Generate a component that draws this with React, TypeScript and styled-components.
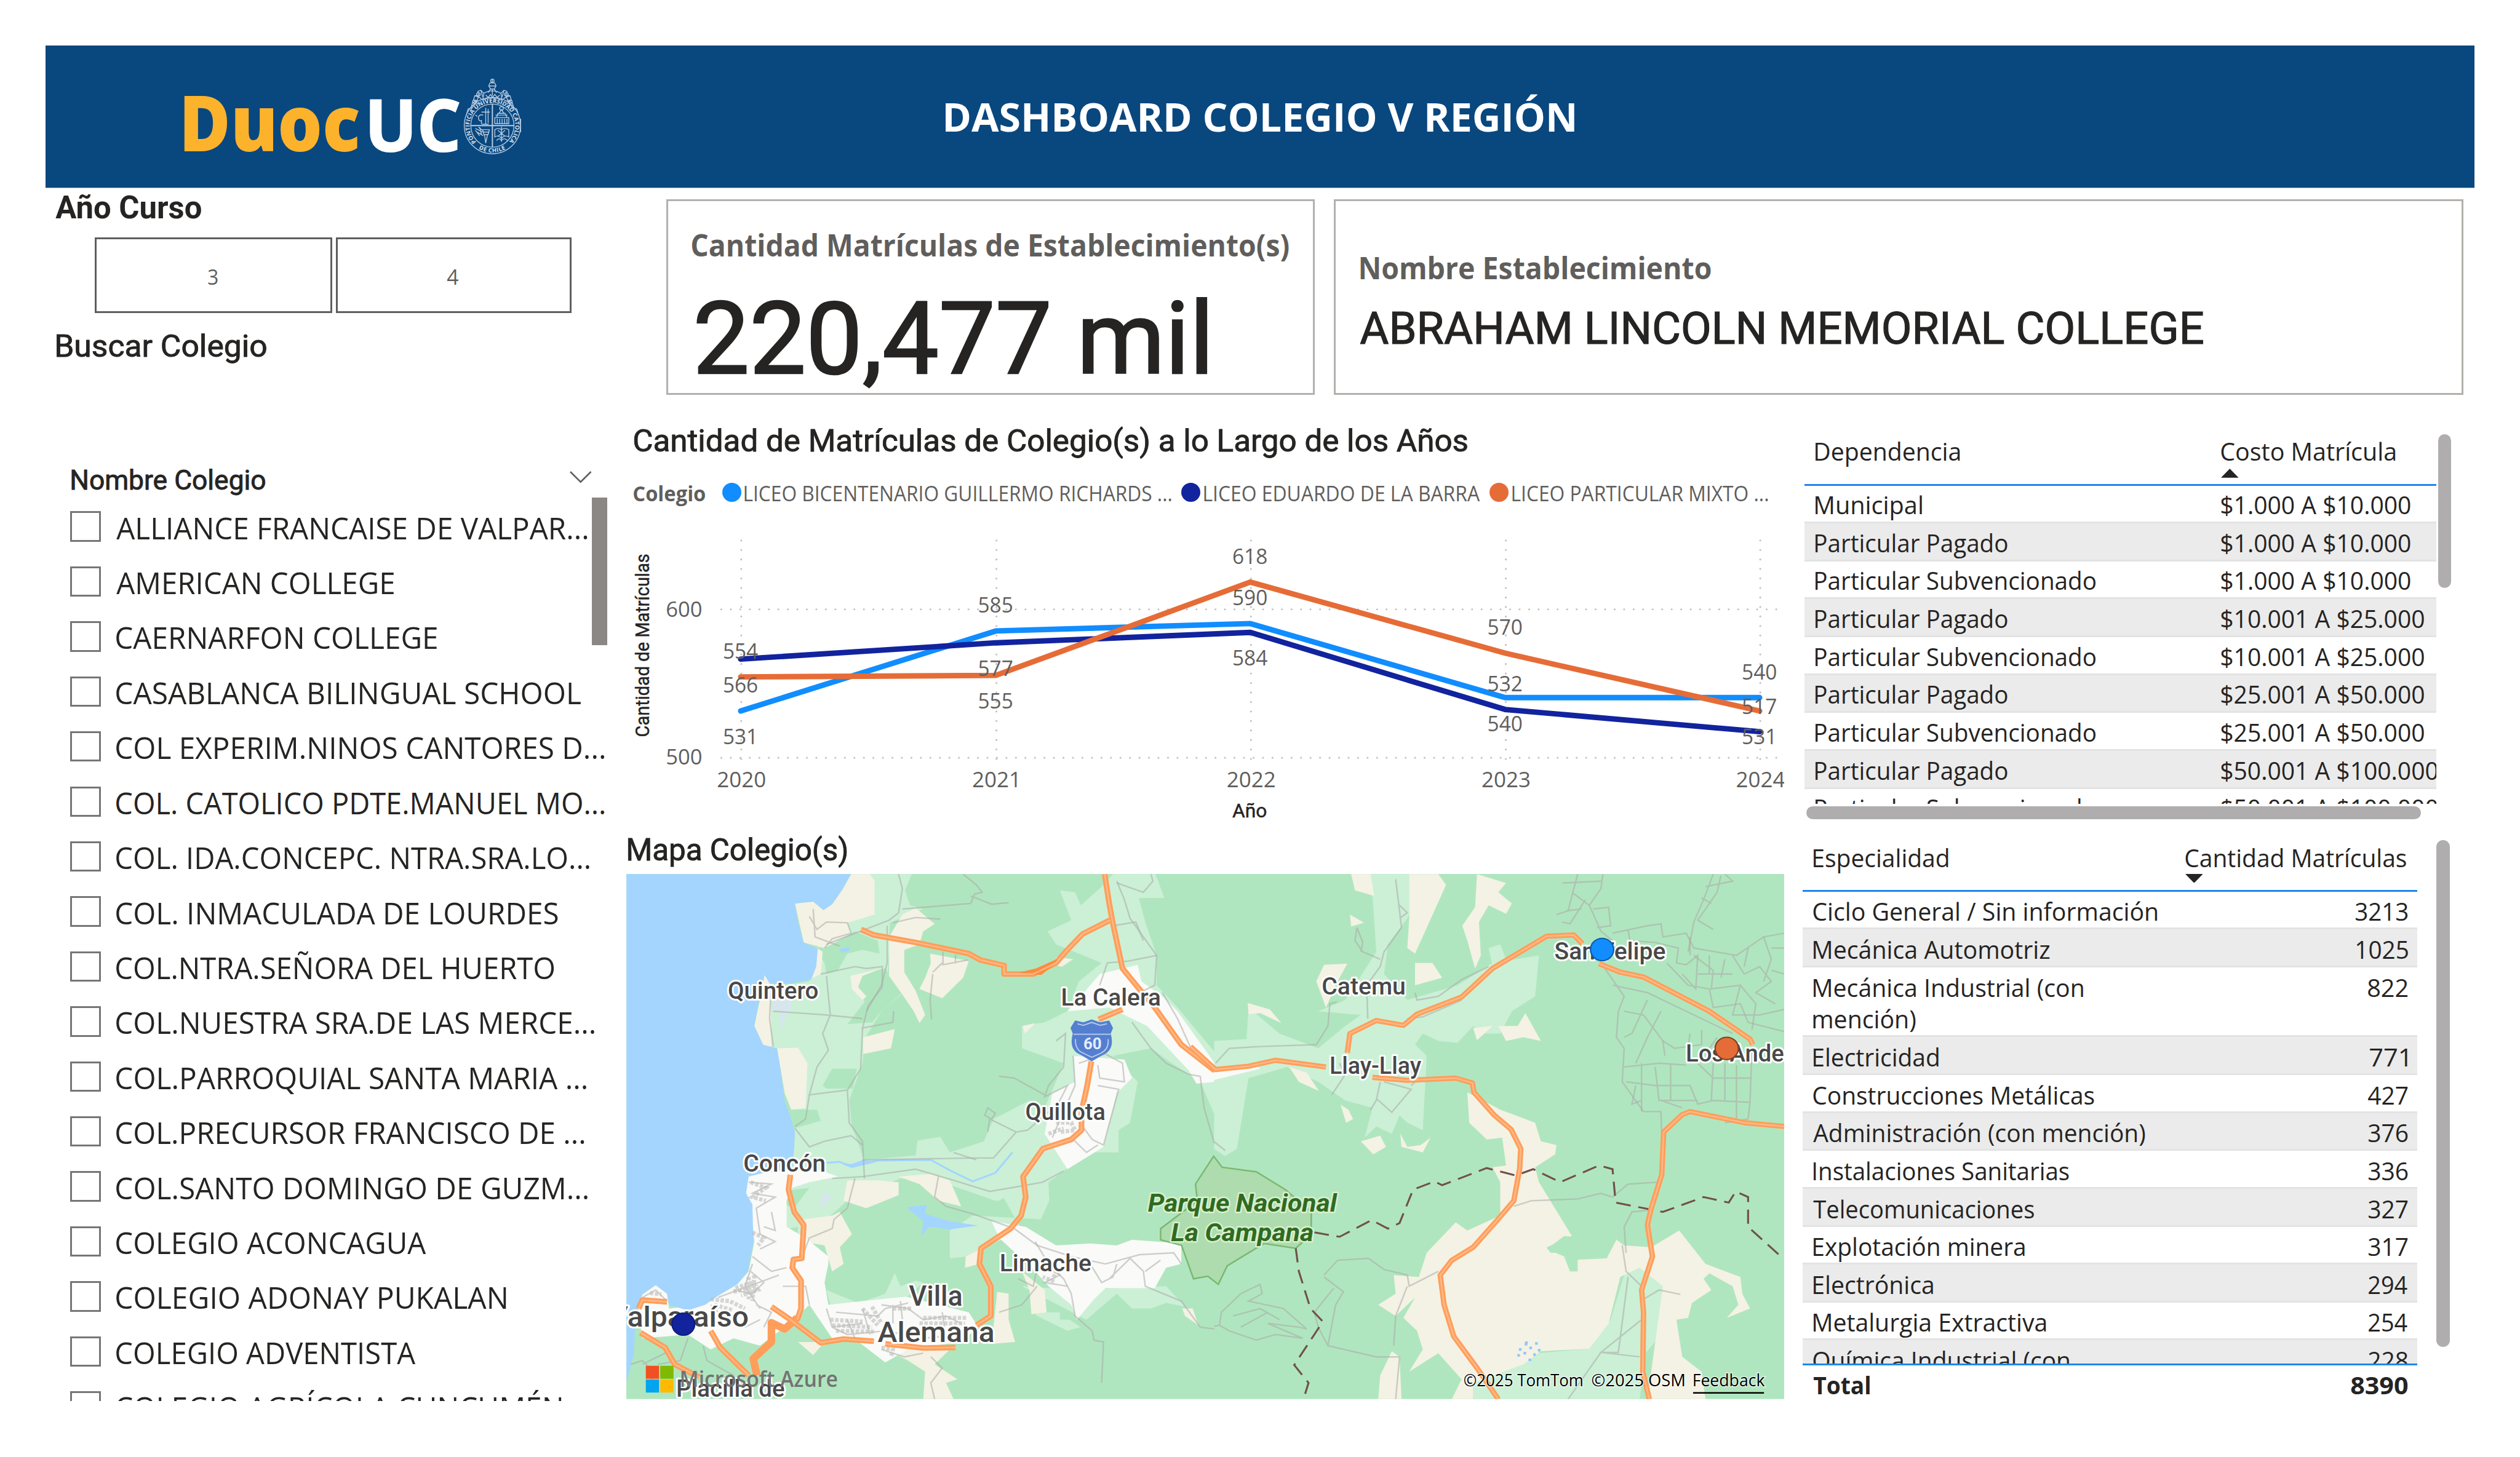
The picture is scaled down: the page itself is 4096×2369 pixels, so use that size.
import React, { useLayoutEffect, useState } from 'react';
import styled, { createGlobalStyle } from 'styled-components';

const SANS = '"Open Sans", "Noto Sans", sans-serif';
const DIN = 'Roboto, "Liberation Sans", sans-serif';
const INK = '#252423';
const MUTED = '#605e5c';

const GlobalStyle = createGlobalStyle`
  html, body { margin: 0; padding: 0; background: #ffffff; overflow: hidden; }
  * { box-sizing: border-box; }
`;

/* ---------- text fitted to a given ink width ---------- */

const FitBox = styled.span<{ $w: number; $size: number; $lh: number; $weight: number; $family: string; $color: string; $mt: number; $bolder: number }>`
  display: block;
  flex: none;
  width: ${p => p.$w}px;
  height: ${p => p.$lh}px;
  margin-top: ${p => p.$mt}px;
  line-height: ${p => p.$lh}px;
  font-family: ${p => p.$family};
  font-size: ${p => p.$size}px;
  font-weight: ${p => p.$weight};
  color: ${p => p.$color};
  -webkit-text-stroke: ${p => p.$bolder}px ${p => p.$color};
`;

const FitInner = styled.span`
  display: inline-block;
  white-space: nowrap;
  transform-origin: 0 0;
`;

type FitProps = {
  w: number; size: number; lh: number; weight?: number; family?: string; color?: string; mt?: number; bolder?: number; children: string;
};

function Fit({ w, size, lh, weight = 400, family = SANS, color = INK, mt = 0, bolder = 0, children }: FitProps) {
  const [transform, setTransform] = useState('none');
  useLayoutEffect(() => {
    const ctx = document.createElement('canvas').getContext('2d');
    if (!ctx) return;
    ctx.font = `${weight} ${size}px ${family}`;
    const m = ctx.measureText(children);
    const left = -m.actualBoundingBoxLeft;
    const ink = m.actualBoundingBoxRight - left;
    const k = w / ink;
    setTransform(`translate(${(0.2 - left * k).toFixed(2)}px, 1.6px) scaleX(${k.toFixed(4)})`);
  }, [w, size, weight, family, children]);
  return (
    <FitBox $w={w} $size={size} $lh={lh} $weight={weight} $family={family} $color={color} $mt={mt} $bolder={bolder}>
      <FitInner style={{ transform }}>{children}</FitInner>
    </FitBox>
  );
}

/* ---------- page frame ---------- */

const Page = styled.div`
  width: 4150px;
  height: 2400px;
  zoom: 0.987;
  padding: 75px 75px 0;
  display: flex;
  flex-direction: column;
  background: #ffffff;
  overflow: hidden;
`;

const Header = styled.header`
  flex: none;
  height: 235px;
  display: grid;
  grid-template-columns: 1fr auto 1fr;
  background: #09477f;
  border-bottom: 1.1px solid #9fbad3;
`;

const Logo = styled.div`
  display: flex;
  align-items: flex-start;
  padding-left: 228px;
  padding-top: 50px;
`;

const LogoGap = styled.div<{ $w: number }>`
  width: ${p => p.$w}px;
  flex: none;
`;

const Crest = styled.svg`
  flex: none;
  width: 102px;
  height: 133px;
`;

const TitleWrap = styled.div`
  display: flex;
  align-items: center;
  height: 229px;
`;

const Body = styled.div`
  display: flex;
  flex: none;
`;

const Sidebar = styled.aside`
  flex: none;
  width: 956px;
  display: flex;
  flex-direction: column;
`;

const Indent = styled.div<{ $l: number; $mt?: number }>`
  padding-left: ${p => p.$l}px;
  margin-top: ${p => p.$mt ?? 0}px;
`;

const YearRow = styled.div`
  display: flex;
  gap: 6px;
  margin-top: 20.6px;
  padding-left: 81.5px;
`;

const YearButton = styled.button<{ $w: number }>`
  width: ${p => p.$w}px;
  height: 125px;
  padding: 0 3px 0 0;
  display: flex;
  align-items: center;
  justify-content: center;
  background: #ffffff;
  border: 3.2px solid #605e5c;
  border-radius: 0;
`;

const SlicerHead = styled.div`
  display: flex;
  align-items: center;
  height: 60px;
  margin-top: 162px;
  padding-left: 43px;
`;

const Chevron = styled.svg`
  width: 38px;
  height: 22px;
  margin-left: 500px;
  margin-bottom: 9px;
`;

const ListArea = styled.div`
  display: flex;
  height: 1487.5px;
  overflow: hidden;
`;

const Rows = styled.div`
  flex: none;
  width: 900px;
  padding-top: 2px;
`;

const SchoolRow = styled.div`
  height: 90.6px;
  display: flex;
  align-items: center;
  padding-left: 41px;
  gap: 26px;
`;

const CheckBox = styled.span`
  flex: none;
  width: 50px;
  height: 50px;
  border: 3.2px solid #767676;
`;

const ListThumb = styled.div`
  width: 25.5px;
  height: 243px;
  background: #8b8785;
`;

const Main = styled.main`
  flex: none;
  width: 3119px;
`;

const Cards = styled.div`
  display: flex;
  gap: 32px;
  padding: 18px 0 0 66px;
`;

const Card = styled.section<{ $w: number }>`
  flex: none;
  width: ${p => p.$w}px;
  height: 322px;
  border: 3.2px solid #b3b0ad;
  padding-left: ${p => (p.$w > 1500 ? 40.5 : 38.4)}px;
`;

const Lower = styled.div`
  display: flex;
`;

const Center = styled.div`
  flex: none;
  width: 1907px;
`;

const Legend = styled.div`
  display: flex;
  align-items: center;
  margin-top: 33px;
  padding-left: 13px;
`;

const LegendItem = styled.div<{ $first?: boolean }>`
  display: flex;
  align-items: center;
  gap: 5.5px;
  margin-left: ${p => (p.$first ? 28 : 16.5)}px;
`;

const Dot = styled.span<{ $c: string }>`
  width: 31.4px;
  height: 31.4px;
  border-radius: 50%;
  background: ${p => p.$c};
`;

const Plot = styled.svg`
  display: block;
  width: 1907px;
  height: 534.5px;
`;

const MapFrame = styled.svg`
  display: block;
  width: 1907px;
  height: 865px;
  margin-top: 11.7px;
`;

/* ---------- tables ---------- */

const Side = styled.div`
  flex: none;
  padding-left: 31px;
  padding-top: 50px;
`;

const TableFrame = styled.div<{ $l?: number }>`
  display: flex;
  padding-left: ${p => p.$l ?? 0}px;
`;

const Table = styled.div<{ $w: number }>`
  flex: none;
  width: ${p => p.$w}px;
`;

const HeadRow = styled.div<{ $h: number; $pt: number; $cols: string }>`
  display: grid;
  grid-template-columns: ${p => p.$cols};
  height: ${p => p.$h}px;
  padding-top: ${p => p.$pt}px;
  border-bottom: 3.2px solid #1f87ea;
`;

const HeadCell = styled.div`
  padding-left: 17px;
`;

const SortArrow = styled.svg<{ $mt: number }>`
  display: block;
  width: 29px;
  height: 15px;
  margin-top: ${p => p.$mt}px;
`;

const TableBody = styled.div<{ $h: number }>`
  height: ${p => p.$h}px;
  overflow: hidden;
`;

const Row = styled.div<{ $cols: string; $odd: boolean; $tall?: boolean }>`
  display: grid;
  grid-template-columns: ${p => p.$cols};
  height: ${p => (p.$tall ? 115 : 62.45)}px;
  padding-top: 5.7px;
  background: ${p => (p.$odd ? '#ebebeb' : '#ffffff')};
  border-bottom: 3.1px solid #e3e3e3;
`;

const Cell = styled.div<{ $right?: boolean }>`
  display: flex;
  flex-direction: column;
  align-items: ${p => (p.$right ? 'flex-end' : 'flex-start')};
  padding: 0 ${p => (p.$right ? 15.7 : 0)}px 0 17px;
`;

const TotalRow = styled.div<{ $cols: string }>`
  display: grid;
  grid-template-columns: ${p => p.$cols};
  padding-top: 6.4px;
  border-top: 3.4px solid #1f87ea;
`;

const VThumb = styled.div<{ $ml: number; $mt: number; $h: number }>`
  width: 22px;
  height: ${p => p.$h}px;
  margin-left: ${p => p.$ml}px;
  margin-top: ${p => p.$mt}px;
  border-radius: 11px;
  background: #afadad;
`;

const HThumb = styled.div`
  width: 1012px;
  height: 22px;
  margin: 3.5px 0 0 6px;
  border-radius: 11px;
  background: #afadad;
`;

/* ---------- data ---------- */

const SCHOOLS: [string, number][] = [
  ['ALLIANCE FRANCAISE DE VALPAR...', 776],
  ['AMERICAN COLLEGE', 457],
  ['CAERNARFON COLLEGE', 528],
  ['CASABLANCA BILINGUAL SCHOOL', 765],
  ['COL EXPERIM.NINOS CANTORES D...', 804],
  ['COL. CATOLICO PDTE.MANUEL MO...', 804],
  ['COL. IDA.CONCEPC. NTRA.SRA.LO...', 779.5],
  ['COL. INMACULADA DE LOURDES', 727],
  ['COL.NTRA.SEÑORA DEL HUERTO', 721],
  ['COL.NUESTRA SRA.DE LAS MERCE...', 787.5],
  ['COL.PARROQUIAL SANTA MARIA ...', 774.5],
  ['COL.PRECURSOR FRANCISCO DE ...', 771],
  ['COL.SANTO DOMINGO DE GUZM...', 776.5],
  ['COLEGIO ACONCAGUA', 510.5],
  ['COLEGIO ADONAY PUKALAN', 642],
  ['COLEGIO ADVENTISTA', 493],
  ['COLEGIO AGRÍCOLA CUNCUMÉN', 733],
];

const PP: [string, number] = ['Particular Pagado', 316.5];
const PS: [string, number] = ['Particular Subvencionado', 462];
const COSTS: [[string, number], [string, number]][] = [
  [['Municipal', 176], ['$1.000 A $10.000', 311.5]],
  [PP, ['$1.000 A $10.000', 311.5]],
  [PS, ['$1.000 A $10.000', 311.5]],
  [PP, ['$10.001 A $25.000', 334]],
  [PS, ['$10.001 A $25.000', 334]],
  [PP, ['$25.001 A $50.000', 334]],
  [PS, ['$25.001 A $50.000', 334]],
  [PP, ['$50.001 A $100.000', 356.5]],
  [PS, ['$50.001 A $100.000', 356.5]],
];

const SPECIALTIES: [[string, number][], [string, number]][] = [
  [[['Ciclo General / Sin información', 567]], ['3213', 86.5]],
  [[['Mecánica Automotriz', 390]], ['1025', 85]],
  [[['Mecánica Industrial (con', 445], ['mención)', 169]], ['822', 65]],
  [[['Electricidad', 207]], ['771', 63]],
  [[['Construcciones Metálicas', 463]], ['427', 66]],
  [[['Administración (con mención)', 547]], ['376', 65]],
  [[['Instalaciones Sanitarias', 421.5]], ['336', 65]],
  [[['Telecomunicaciones', 364]], ['327', 65]],
  [[['Explotación minera', 348]], ['317', 65]],
  [[['Electrónica', 197]], ['294', 65]],
  [[['Metalurgia Extractiva', 383]], ['254', 65]],
  [[['Química Industrial (con', 422]], ['228', 65]],
];

const COLS1 = '668.7px 371.3px';
const COLS2 = '612.4px 399.3px';

const YEARS = [1220.3, 1640.5, 2059.7, 2479.4, 2898.4];
const SERIES: { color: string; values: number[] }[] = [
  { color: '#118dff', values: [531, 585, 590, 540, 540] },
  { color: '#12239e', values: [566, 577, 584, 532, 517] },
  { color: '#e66c37', values: [554, 555, 618, 570, 531] },
];
const POINT_LABELS: [number, number, string][] = [
  [1219, 1074, '554'], [1219, 1129, '566'], [1219, 1215, '531'],
  [1639, 998, '585'], [1639, 1102, '577'], [1639, 1156, '555'],
  [2058, 917.5, '618'], [2058, 986, '590'], [2058, 1085, '584'],
  [2478, 1034.5, '570'], [2478, 1127, '532'], [2478, 1193.5, '540'],
  [2897, 1108, '540'], [2897, 1164.5, '517'], [2897, 1215, '531'],
];
const valueY = (v: number) => 1248 - (v - 500) * 2.44;

/* ---------- logo ---------- */

function CrestMark() {
  return (
    <Crest viewBox="760 125 102 133" fill="none" stroke="#b4cbe2" strokeWidth="1.4">
      <defs>
        <path id="crestTop" d="M784.5 234 A37.6 37.6 0 1 1 837.5 234" />
        <path id="crestBottom" d="M786 244 A45 45 0 0 0 836 244" />
      </defs>
      <circle cx="811" cy="207.3" r="46.4" />
      <circle cx="811" cy="207.3" r="35.6" />
      <path d="M811 171.7V243M775.4 207.3H846.6" strokeWidth="2" />
      <g stroke="none" fill="#d3e1ef" fontFamily={SANS} fontWeight="700">
        <text fontSize="9.6"><textPath href="#crestTop" textLength="176" lengthAdjust="spacing">PONTIFICIA UNIVERSIDAD CATOLICA</textPath></text>
        <text fontSize="9.6"><textPath href="#crestBottom" startOffset="3" textLength="46">DE CHILE</textPath></text>
      </g>
      <circle cx="811" cy="133.5" r="2.8" />
      <path d="M811 130V137M807 137H815L817 142L814 147H808L805 142ZM806 142H816M808 147L804 153M814 147L818 153" />
      <path d="M797 154Q811 146 825 154L827 165Q811 158 795 165ZM800 157L804 161L808 156L811 161L815 156L819 161L823 157M811 147V158" />
      <path d="M797 154L792 149L787 151L789 157L782 158L780 165L786 166L778 170L776 178L771 180L768 190M795 165L788 160L784 170L779 176L775 182M792 149L795 160M782 158L792 162M780 165L787 172" />
      <path d="M825 154L830 149L835 151L833 157L840 158L842 165L836 166L844 170L846 178L851 180L854 190M827 165L834 160L838 170L843 176L847 182M830 149L827 160M840 158L830 162M842 165L835 172" />
      <circle cx="788" cy="156" r="3" /><circle cx="834" cy="156" r="3" /><circle cx="781" cy="168" r="2.6" /><circle cx="841" cy="168" r="2.6" />
      <path d="M800 178V205M793 185H807M796 190Q788 188 788 195Q789 201 793 199V205M786 192L783 190M804 180V203M794 205H805" />
      <path d="M815 204V194H838V204ZM818 194L820 187H832L835 194M822 187L826 181L830 187M819 204V196M823 204V196M827 204V196M831 204V196M835 204V196M816 190H836" />
      <circle cx="826" cy="179" r="3" />
      <path d="M795 214H806L804 222H797ZM798 222L800 236L803 222M783 212L795 218M786 218L796 224M788 210L796 216M783 215L790 224M790 210L793 222M796 218H806" />
      <path d="M826 209V234M815 214Q820 210 826 214Q832 210 838 214V226Q832 222 826 228Q820 222 815 226ZM818 232Q822 226 826 232Q830 226 836 232M820 215L832 225M832 215L820 225" />
      <path d="M857.5 196V218" strokeWidth="1.6" />
    </Crest>
  );
}

/* ---------- line chart ---------- */

function LineChart() {
  return (
    <Plot viewBox="1031 835 1907 534.5">
      <g stroke="#c4c2c0" strokeWidth="3.2" strokeLinecap="round" strokeDasharray="0 15.65">
        {YEARS.map(x => <line key={x} x1={x} x2={x} y1={891.5} y2={1252} />)}
        <line x1={1187.5} x2={2925} y1={1005} y2={1005} />
        <line x1={1187.5} x2={2925} y1={1249.5} y2={1249.5} />
      </g>
      {SERIES.map(s => (
        <polyline
          key={s.color}
          points={s.values.map((v, i) => `${YEARS[i] - 1},${valueY(v)}`).join(' ')}
          fill="none"
          stroke={s.color}
          strokeWidth="9"
          strokeLinejoin="miter"
          strokeLinecap="round"
        />
      ))}
      <g fontFamily={SANS} fontSize="35" fill={MUTED} textAnchor="middle">
        {POINT_LABELS.map(([x, y, t], i) => (
          <text key={i} x={x} y={y + 12.6} textLength="58" lengthAdjust="spacingAndGlyphs">{t}</text>
        ))}
        {YEARS.map((x, i) => (
          <text key={x} x={x + 0.5} y={1298.4} textLength="81" lengthAdjust="spacingAndGlyphs">{2020 + i}</text>
        ))}
        <text x="1126" y="1017" textLength="60" lengthAdjust="spacingAndGlyphs">600</text>
        <text x="1126" y="1261" textLength="60" lengthAdjust="spacingAndGlyphs">500</text>
      </g>
      <g fontFamily={DIN} fontSize="31" fontWeight="400" fill={INK} stroke={INK} strokeWidth="0.5" textAnchor="middle">
        <text x="2057.5" y="1348" textLength="57" lengthAdjust="spacingAndGlyphs">Año</text>
        <text transform="translate(1068 1064.4) rotate(-90)" textLength="302" lengthAdjust="spacingAndGlyphs">Cantidad de Matrículas</text>
      </g>
    </Plot>
  );
}

/* ---------- map ---------- */

const WATER = '#a4d5ff';
const FOREST = '#b0e6bf';
const GRASS = '#cbf0d6';
const SAND = '#f4f2e4';
const TOWN = '#fafaf8';

const WEST_GRASS = [
  'M600 131H770L752 175L765 215L800 225L712 262L707 400L745 452L690 500L645 575L640 640L605 740L612 810L645 900L780 888L785 848L845 838L870 880L960 850L985 790L1080 740L1145 800L1110 870L1060 970L1000 1010H990L850 960L740 950L600 1010L490 1110L400 1080L345 1020L340 940L455 920L462 825L440 640L378 590L355 540L375 440L500 420L520 330Z',
  'M1160 175L1200 180L1215 215L1270 165L1300 131H1412L1435 195H1368L1385 260L1415 350V430L1470 490L1568 610V780L1530 690L1455 640L1400 600L1300 620L1365 690L1345 800L1315 820V880L1235 880L1170 930L1130 960L1132 1010L1110 1060L930 1050L870 1090L870 1165L915 1160L940 1145L1060 1090L1000 980L1080 820L1120 760L1170 640L1060 600V540L1120 530L1180 500L1210 420L1270 370L1150 320L1128 285L1190 255Z',
  'M545 1250L640 1290L740 1285L800 1230L780 1225L740 1240L725 1205L700 1260L560 1310Z',
  'M1060 1240L1230 1330L1310 1260L1350 1300L1400 1300L1440 1285L1490 1295L1440 1240L1200 1250Z',
  'M1090 1310H1160V1330H1185L1215 1350L1180 1360L1100 1320Z',
];
const WEST_FOREST = [
  'M545 400L540 370L515 330L560 320L620 285L680 310L685 345L640 335L600 345L575 390Z',
  'M765 330L818 355L800 400L790 450L775 460L750 400L752 360Z',
  'M630 400L700 385L745 450L690 500L665 530L600 535L645 475L628 430Z',
  'M535 700L560 655L625 655L615 708L545 708Z',
  'M455 765L520 765L530 795L460 815Z',
  'M388 1000L420 985L500 975L460 1030Z',
  'M420 1090L470 1080L468 1130Z',
  'M240 1430L280 1400L340 1470H560L505 1420L430 1400L400 1390L360 1430Z',
];
const WEST_SAND = [
  'M610 131H660L672 150V240L600 262L610 290L540 330L485 315L462 210L510 205L537 228L560 212L590 170Z',
  'M780 222L830 265L800 285L790 320L750 335V395L780 445L805 510L790 532L775 500L745 455L710 405V300L745 240Z',
  'M818 345L920 365L905 410L850 465L790 440L805 410L820 370Z',
  'M608 405L690 385L640 405L628 435L650 460L640 470L612 440Z',
  'M642 570L725 548L715 600L642 615Z',
  'M415 600L470 598L495 640L490 760L452 765L435 720Z',
  'M382 402L398 430L400 600L378 590L355 540L368 480Z',
  'M520 330L535 340L530 400L500 415L515 370Z',
  'M485 1060L560 1050L580 1040L612 1100L580 1135L590 1180L560 1200L540 1130L480 1120Z',
  'M590 1010L600 955H680L735 960V995L650 1030Z',
  'M735 945L820 938L870 955L900 1025L840 1010L790 965Z',
  'M1062 540L1095 532L1068 560Z',
  'M912 1160L950 1140L948 1180L910 1190Z',
  'M995 1255L1025 1260V1330L1042 1390L980 1395Z',
  'M1060 1200L1120 1250L1125 1310L1085 1315L1080 1250Z',
  'M1482 1300L1510 1300L1525 1345L1490 1320Z',
  'M800 1544L805 1470L760 1440L700 1410L880 1400L830 1450L890 1490L860 1500L880 1544Z',
  'M470 1390L540 1390L510 1425Z',
  'M1150 355L1195 360L1165 380L1145 375Z',
];
const WEST_TOWN = [
  'M1265 400L1365 375L1375 420L1430 460L1470 500L1568 640V690L1520 695L1500 660L1390 540L1290 490L1180 500L1215 460Z',
  'M1195 620L1330 630L1350 680L1310 720L1275 865L1180 925L1120 830L1140 720L1200 690Z',
  'M980 1065L1070 1080L1150 1130L1240 1125L1310 1130L1350 1115L1480 1125V1180L1440 1190L1410 1245H1280L1250 1275L1205 1330L1190 1290L1130 1240L1095 1200L1000 1110Z',
  'M340 940L470 925L520 925L575 945L500 960L455 975L440 1010L440 1080L490 1110L550 1160V1180L540 1230L550 1290L640 1280L755 1268L920 1310L945 1350L900 1390L760 1410L700 1445L630 1390L560 1380L500 1290L460 1330L370 1400L300 1380L240 1410L180 1370L60 1380L48 1300L60 1262L95 1237L125 1260L130 1300L225 1290L260 1265L310 1235L340 1200L355 1120L345 1020L333 990Z',
];
const WEST_WATER = [
  'M18 131H610L585 175L560 212L537 228L510 205L462 210L470 260L485 315L522 332L518 380L505 415L450 425H395L382 402L375 440L362 500L355 540L378 590L415 600L425 665L435 740L452 790L462 825L460 870L455 920L400 930L340 945L333 990L350 1020L352 1120L338 1200L310 1235L260 1265L225 1290L180 1305L130 1290L125 1260L95 1237L60 1262L48 1290L55 1330L40 1360L38 1420L18 1500Z',
  'M755 1027L810 1022L805 1045L835 1055L870 1065L945 1077L870 1087L815 1080L795 1105L800 1065Z',
  'M578 333L605 328V338L585 343Z',
];
const WEST_MINOR = [
  'M500 245L520 280L545 260L600 262L610 290L560 305L540 330M510 225L515 300L580 325',
  'M735 131L745 170L735 235L710 255L545 320M745 225L865 215L925 210L935 185L955 180L940 160L905 131M925 190L950 200L980 212L1025 208',
  'M720 262L780 248L845 252M705 270V370L690 430L650 500',
  'M530 400L620 380L650 385L692 380V435L655 485L640 545L720 530L722 500',
  'M404 500L545 510L640 520M545 405L555 510L535 560L550 605L520 650L500 725L600 712L635 655L640 545M600 712L605 800L640 850L645 950',
  'M500 725L490 790L462 810M462 815L500 865L540 850L610 835L640 860',
  'M400 430L395 520L405 595M852 340V375L918 362M885 348V372M825 400L818 470L822 522M825 395L850 370',
  'M640 900L930 895L985 895L1045 825L975 790L970 825M1045 825L1075 820L1130 770M970 760L990 775L980 790L962 780Z',
  'M560 950L640 945L780 925L880 955L975 985L1060 970L1115 960L1170 930M880 880L940 900',
  'M620 950L600 1030L565 1060L560 1085L500 1110L485 1150M840 945L830 1000L860 1025L930 1045L1040 1085L1100 1130L1190 1160L1280 1180L1370 1155L1460 1150L1480 1180',
  'M1350 530L1400 600L1440 640L1500 670L1530 675L1540 760L1568 860M1310 150L1330 200L1345 250L1415 350L1410 430L1370 450',
  'M1310 155L1380 180L1405 150L1400 131M1300 270L1360 260L1380 310M1265 430L1285 370L1340 365L1415 350M1430 450L1470 520L1510 610',
  'M1150 580L1175 560L1170 650L1130 700L1120 730L1180 700L1150 760M1000 675L1040 680L1120 725M1195 620L1200 700L1140 840M1210 640L1280 615L1325 640L1330 690L1265 680L1260 645M1260 700L1315 710L1275 860L1245 845L1220 810M1190 840L1230 880L1260 860',
  'M1095 1120L1130 1180L1170 1220L1190 1260L1200 1320L1245 1360L1250 1385L1275 1390L1270 1500M1240 1180L1270 1230L1300 1215L1310 1180M1290 1220L1345 1165L1380 1200L1385 1240L1480 1280L1530 1350L1568 1355M1385 1200L1425 1170',
  'M1050 1220L1090 1240L1100 1190M1100 1240L1060 1290L1000 1310M1110 1180L1160 1210L1120 1230L1180 1240',
  'M340 960L400 965L350 990L410 1000L360 1030L370 1100L410 1120L370 1140M350 1160L400 1200L440 1190M345 1200L380 1230L350 1260L300 1250M350 1180L330 1240L370 1300M360 1290L400 1310L380 1350M240 1290L270 1320L330 1350L370 1330M430 1240L490 1240L500 1290M260 1270L340 1240L420 1210M400 1040L410 1090L380 1080',
  'M60 1270L95 1250L120 1275M180 1380L160 1440L100 1450M30 1450L60 1440L90 1470L80 1520M120 1420L60 1450M220 1400L230 1440L300 1480',
  'M545 1300L560 1350L600 1370L700 1360L800 1380L900 1370M570 1310L680 1320L700 1300L760 1285M720 1290V1340M740 1280L745 1330M560 1350L640 1340M690 1290L760 1300L800 1330L860 1320L900 1340M640 1300L660 1370M600 1330L620 1380M690 1410L750 1430L800 1420M850 1310L860 1380M820 1430L850 1460L820 1500L830 1544',
];
const WEST_BLOCKS = [
  'M305 1245L350 1230L365 1250L320 1265M300 1255L365 1240M340 1215V1275M355 1210L350 1280M240 1275L290 1280L330 1300M250 1290L300 1305',
  'M555 1330L640 1335M560 1345L665 1350M570 1360L670 1362M640 1300L680 1345M665 1295L690 1340M800 1325L915 1325M790 1340L910 1340M720 1300L770 1300',
  'M345 960L385 975L350 1000L385 1010M350 1095L380 1110L365 1130M1120 1195L1150 1200L1140 1225L1115 1215M1150 800L1190 800L1200 820L1160 825M1130 830L1170 815',
  'M690 1405L720 1410L715 1430M80 1258L110 1262',
];
const WEST_HIGHWAYS = [
  'M636 280L670 295L780 315L920 345L950 362L1013 377V400L1090 400L1150 370L1175 340L1220 292L1292 255',
  'M1278 131L1290 210L1300 265L1325 385L1365 435L1410 490L1480 590L1568 660',
  'M1325 495L1262 522',
  'M1243 635L1232 700L1217 770V820L1190 845L1115 870L1063 945L1070 1000L1058 1050L1030 1085L952 1138L948 1180L978 1240V1320L940 1345',
  'M450 940L445 980L460 1040L485 1075L480 1165L458 1168L455 1190L478 1225V1300L468 1330',
  'M400 1295L450 1330L530 1392L590 1382L670 1388',
  'M700 1395L800 1406L885 1405',
  'M240 1360L265 1405L340 1480',
  'M125 1282L60 1277L50 1300',
  'M55 1365L120 1405L145 1450L210 1485',
];
const EAST_GRASS = [
  'M415 131H570L585 195L560 250L510 320L500 400L560 470L690 430L780 370L900 350L890 460L830 500L800 560L760 560L730 540L690 585L640 580L600 560L580 590L610 620L600 820L560 800L540 780L520 830L480 810L450 840L470 760L400 740L330 690L250 650L150 680L120 870L90 890L60 870L0 750V600L60 580L145 575L150 490L230 560L330 600L400 540L440 510L330 500L400 470L480 340L470 190Z',
  'M770 330L800 320L815 360L780 380Z',
  'M1120 1210L1160 1190L1225 1230L1215 1370L1175 1420L1160 1544H730V1500L900 1420L1030 1408L1085 1330Z',
];
const EAST_SAND = [
  'M415 131H465L475 190L425 175Z',
  'M565 131H640L660 160L580 345L560 330L565 250Z',
  'M740 131L815 155L795 180L830 210L815 238L770 215L745 260L750 350L735 385L715 310L702 270L735 220Z',
  'M412 240L448 262L415 272Z',
  'M345 375L405 372L380 420L350 490L325 420Z',
  'M580 370H625L650 410L580 430Z',
  'M148 478L205 495L235 532L180 505L150 508Z',
  'M255 650L300 665L332 715L280 690Z',
  'M730 545L780 540L740 578Z',
  'M795 540L845 540L865 505L905 580L860 570L815 580Z',
  'M388 752L408 765L420 790L402 800Z',
  'M440 850L490 835L505 865L472 885Z',
  'M542 830L560 865L595 860L620 840L600 880L545 865Z',
  'M715 718L800 765L890 800L905 850L945 860L942 885L890 920L900 960L985 1105L920 1135L930 1150L1000 1150L985 1200L960 1190L970 1170L1075 1165L1100 1115L1120 1130L1190 1135L1262 1090L1330 1180L1420 1215L1425 1260L1445 1300L1385 1325L1415 1290L1400 1240L1340 1205L1325 1220L1345 1250L1295 1285L1285 1325L1255 1330L1270 1430L1320 1470L1330 1544H1180L1220 1240L1160 1190L1110 1215L1080 1340L1030 1408L905 1415L860 1450L730 1500V1544H675L700 1490L640 1420L565 1470L600 1410L585 1360L550 1325L580 1270L530 1320L485 1290L530 1260L525 1210L590 1215L610 1150L685 1068L715 1090L800 1050V960L780 920L815 915L805 840L765 845L720 800Z',
  'M485 1544L490 1480L520 1415L540 1430L545 1544Z',
  'M0 1300L20 1335L0 1345Z',
];
const EAST_FOREST = [
  'M920 1140L965 1105L1100 1115L1070 1165L1000 1145V1200L980 1200L965 1160Z',
];
const EAST_MINOR = [
  'M530 145L540 230L545 275L500 340L490 380L455 430L458 520M430 275L425 310L445 340L490 360M430 275L445 315L440 340M540 215L560 235L540 250',
  'M65 640L100 600L180 595L325 590L355 540L360 480L378 475M580 450L585 470L640 460L700 415L770 380M560 520L600 515L700 470',
  'M30 670L45 800L60 850L90 875M385 640L400 670L365 725M490 690L480 740L465 765M480 735L520 772L570 710L500 690M570 700L580 690',
  'M835 1025L880 1010L1000 1005L1060 990L1090 1000L1130 965L1210 960',
  'M1125 1150L1120 1080L1140 1040L1190 1035M1115 1130L1125 1200L1165 1240M1130 1215L1105 1418L1060 1418L975 1544M1165 1330L1060 1418L1160 1430M1170 1275L1210 1250L1265 1262',
  'M345 1210L380 1170L460 1165L500 1195L560 1210L565 1240L640 1200M345 1215L395 1255L375 1290L355 1400L480 1430L540 1430L530 1544M560 1240L530 1320L525 1400M370 1245L320 1310L330 1350L355 1400',
  'M0 1310L50 1350L75 1345L80 1310L130 1260L180 1235L185 1260L150 1280L240 1300L300 1355L280 1350L200 1340L290 1380L220 1370L170 1385L100 1360L75 1345M110 1320L180 1300L230 1330M130 1350L200 1310',
  'M1000 131L985 190L975 230L945 240M985 180L1030 215L1060 170L1065 131M960 155L1060 150M1020 200L980 265L960 260M970 230L1010 225M1030 215L1060 285L1090 310M1040 225L1080 220L1085 270L1050 275',
  'M1350 131L1325 200L1300 260L1285 340M1370 135L1360 180L1310 255L1350 280M1330 165L1400 150L1380 131M1320 195L1345 210',
  'M1090 290L1180 270L1215 265L1220 300L1280 290L1300 330L1410 350L1480 300L1534 290M1130 280L1135 310L1200 315L1260 330L1255 370L1280 375L1310 350L1305 440L1270 400M1230 370L1285 430L1340 440L1350 490L1420 480L1440 530L1534 555',
  'M1300 350L1350 390L1345 440L1420 430L1400 510L1470 510L1534 495M1400 350L1430 400L1470 380L1500 420L1460 450L1510 480M1440 330L1430 380M1480 300L1500 360L1480 420M1420 430L1460 480L1450 550M1380 360L1370 410M1310 400L1400 400M1340 350V400M1500 330H1534M1500 390L1534 400M1290 300L1290 350',
  'M1070 385L1120 460L1105 500L1100 570L1120 600L1115 690L1170 770L1215 770L1217 830M1090 430L1180 450L1320 520L1400 560M1180 470L1140 560L1120 570M1120 500L1170 510L1220 580L1225 620M1215 500L1180 570L1150 640',
  'M1120 650L1210 640L1280 645M1125 690L1200 700L1290 700L1310 750L1350 740L1445 745L1450 600M1165 640V770M1200 650L1210 740L1310 740M1240 640V740M1310 640L1350 680L1440 680M1350 640L1345 740M1380 640V740M1410 645V800M1290 560L1280 640M1320 550V590L1250 600L1220 580M1360 570L1340 600M1450 680H1400M1150 700L1140 750L1165 740M1215 740L1270 760M1445 745L1440 790L1380 800',
];
const EAST_HIGHWAYS = [
  'M0 595L65 657L150 648L220 632L350 650',
  'M470 678L560 686L685 680L728 693L732 718L785 780L828 818L853 870L850 925L835 1010L790 1065L730 1135L675 1170L645 1210L655 1290L680 1375L740 1460L795 1544',
  'M405 612L412 560L480 525L550 538L585 508L700 462L780 385L920 298L990 295L1012 318',
  'M1055 372L1110 395L1170 408L1340 500L1445 575L1452 590',
  'M1534 810L1430 800L1290 770L1270 778L1222 825L1217 940L1190 1030L1180 1075L1193 1160L1165 1250L1170 1310L1168 1470L1185 1544',
];
const PARK = 'M60 890L82 920L170 932L245 980L312 1040V1100L272 1138L190 1125L95 1185L72 1235L45 1213L8 1220L-23 1130L-77 1115V1085L18 1010L13 965Z';
const BORDERS = [
  'M320 1095L385 1107L468 1062L510 1085L540 1070L575 980L630 958L650 968L765 922L840 942L885 925L955 960L1055 915L1090 925L1098 1015L1220 1040L1325 1000L1390 1015L1408 985L1440 1000V1080L1530 1165',
  'M272 1138L280 1200L310 1300L342 1335L268 1452L305 1500L293 1540',
];

const paths = (list: string[], fill: string) => list.map((d, i) => <path key={i} d={d} fill={fill} />);
const strokes = (list: string[]) => list.map((d, i) => <path key={i} d={d} />);

const PlaceLabel = styled.text`
  font-family: ${DIN};
  font-weight: 500;
  fill: #484848;
  stroke: #ffffff;
  stroke-width: 10px;
  stroke-linejoin: round;
  paint-order: stroke;
`;

const ParkLabel = styled(PlaceLabel)`
  font-style: italic;
  font-weight: 700;
  fill: #2f6b22;
  stroke: #d9f0cf;
  stroke-width: 5px;
`;

const Credit = styled.text`
  font-family: ${SANS};
  font-size: 46px;
  fill: #000000;
  stroke: rgba(255, 255, 255, 0.6);
  stroke-width: 5px;
  paint-order: stroke;
`;

function Place({ x, y, w, size = 65, children }: { x: number; y: number; w: number; size?: number; children: string }) {
  return <PlaceLabel x={x - 3} y={y} fontSize={size} textLength={w + 5} lengthAdjust="spacingAndGlyphs">{children}</PlaceLabel>;
}

function RegionMap() {
  const west = 'translate(-11 -80) scale(0.625 0.61225)';
  const east = 'translate(929 -80) scale(0.63776 0.61225)';
  return (
    <MapFrame viewBox="0 0 1907 865">
      <defs>
        <clipPath id="westHalf"><rect x="0" y="0" width="969" height="865" /></clipPath>
        <clipPath id="eastHalf"><rect x="968" y="0" width="939" height="865" /></clipPath>
      </defs>
      <rect width="1907" height="865" fill={FOREST} />
      <g clipPath="url(#westHalf)"><g transform={west}>
        {paths(WEST_GRASS, GRASS)}
        {paths(WEST_FOREST, FOREST)}
        {paths(WEST_SAND, SAND)}
        {paths(WEST_TOWN, TOWN)}
        {paths(WEST_WATER, WATER)}
        <path d="M404 470H452L450 500H404ZM422 505L440 500L426 558ZM540 985L560 1000L522 1035Z" fill="#d7e6ee" />
        <path d="M545 908L580 905L600 915L680 902L820 900L870 928L930 958L990 935L1035 880" fill="none" stroke={WATER} strokeWidth="5" />
        <path d="M580 905L610 922L680 905L640 900L610 912Z" fill={WATER} />
        <g fill="none" stroke="#a9aaa8" strokeOpacity="0.55" strokeWidth="4">{strokes(WEST_MINOR)}</g>
        <g fill="none" stroke="#bdbdbb" strokeOpacity="0.6" strokeWidth="11" strokeDasharray="9 4">{strokes(WEST_BLOCKS)}</g>
      </g></g>
      <g clipPath="url(#eastHalf)"><g transform={east}>
        {paths(EAST_GRASS, GRASS)}
        {paths(EAST_SAND, SAND)}
        {paths(EAST_FOREST, FOREST)}
        <path d="M0 620L60 665L170 645L180 655L40 690L0 680Z" fill={TOWN} />
        <g fill="none" stroke="#a9aaa8" strokeOpacity="0.55" strokeWidth="4">{strokes(EAST_MINOR)}</g>
        <path d="M848 1410h7m8-14h7m-10 24h7m8-14h7m3 18h7m-2-30h7m0 18h7m-60 14h7m22 12h7m-16-46h7" fill="none" stroke="#8cc8ff" strokeWidth="7" />
      </g></g>
      <g transform={east}>
        <path d={PARK} fill="#aedcae" stroke="#7ab872" strokeWidth="4" />
        <g fill="none" stroke="#705149" strokeWidth="5" strokeDasharray="38 20">{strokes(BORDERS)}</g>
      </g>
      <g fill="none" strokeLinejoin="round">
        <g transform={west}>
          <g stroke="#ff9e5a" strokeWidth="15">{strokes(WEST_HIGHWAYS)}<path d="M468 1325L435 1355L400 1338V1390L352 1435L362 1480" strokeWidth="20" /><path d="M1060 398L1100 388L1150 365L1110 398Z" fill="#ff8b3d" strokeWidth="8" stroke="#ff8b3d" /></g>
          <g stroke="#ffb988" strokeWidth="4">{strokes(WEST_HIGHWAYS)}</g>
        </g>
        <g transform={east}>
          <g stroke="#ff9e5a" strokeWidth="14">{strokes(EAST_HIGHWAYS)}</g>
          <g stroke="#ffb988" strokeWidth="4">{strokes(EAST_HIGHWAYS)}</g>
        </g>
      </g>
      <g transform={west}>
        <path d="M1200 525L1222 530L1244 522L1266 530L1290 525L1300 545L1294 560Q1306 605 1272 618L1244 635L1216 618Q1182 605 1194 560L1188 545Z" fill="#547fd0" />
        <path d="M1206 534L1222 538L1244 530L1266 538L1284 534M1196 562H1294M1201 575Q1200 605 1222 613L1244 624L1268 613Q1290 602 1287 575" fill="none" stroke="#b9cdf0" strokeWidth="3" />
        <text x="1222" y="602" fontFamily={DIN} fontWeight="700" fontSize="42" fill="#e6eefc" textLength="48" lengthAdjust="spacingAndGlyphs">60</text>
        <Place x={288} y={466} w={234}>Quintero</Place>
        <Place x={1166} y={484} w={258}>La Calera</Place>
        <Place x={1072} y={792} w={206}>Quillota</Place>
        <Place x={329} y={932} w={212}>Concón</Place>
        <Place x={1004} y={1200} w={237}>Limache</Place>
        <Place x={765} y={1293} w={137} size={77}>Villa</Place>
        <Place x={683} y={1390} w={303} size={77}>Alemana</Place>
        <Place x={-25} y={1348} w={363} size={77}>Valparaíso</Place>
        <Place x={152} y={1537} w={281}>Placilla de</Place>
        <rect x="69" y="1454" width="35" height="35" fill="#f25022" />
        <rect x="107" y="1454" width="35" height="35" fill="#7fba00" />
        <rect x="69" y="1491" width="35" height="35" fill="#00a4ef" />
        <rect x="107" y="1491" width="35" height="35" fill="#ffb900" />
        <text x="158" y="1510.5" fontFamily={SANS} fontWeight="600" fontSize="59" fill="#737373" textLength="417" lengthAdjust="spacingAndGlyphs">Microsoft Azure</text>
        <circle cx="168" cy="1342" r="30" fill="#12239e" stroke="#0d1a78" strokeWidth="3" />
      </g>
      <ParkLabel x="859" y="556" fontSize="41" textLength="311" lengthAdjust="spacingAndGlyphs">Parque Nacional</ParkLabel>
      <ParkLabel x="897" y="604.5" fontSize="41" textLength="235" lengthAdjust="spacingAndGlyphs">La Campana</ParkLabel>
      <g transform={east}>
        <Place x={342} y={455} w={212}>Catemu</Place>
        <Place x={943} y={360} w={282}>San Felipe</Place>
        <Place x={362} y={668} w={232}>Llay-Llay</Place>
        <Place x={1282} y={635} w={280}>Los Andes</Place>
        <circle cx="1063" cy="334" r="30" fill="#118dff" stroke="#0b5cab" strokeWidth="3.5" />
        <circle cx="1385" cy="600" r="30" fill="#e66c37" stroke="#7d4128" strokeWidth="3.5" />
        <Credit x="705" y="1509.5" textLength="310" lengthAdjust="spacingAndGlyphs">©2025 TomTom</Credit>
        <Credit x="1035" y="1509.5" textLength="244" lengthAdjust="spacingAndGlyphs">©2025 OSM</Credit>
        <Credit x="1296" y="1509.5" textLength="187" lengthAdjust="spacingAndGlyphs">Feedback</Credit>
        <path d="M1298 1527H1481" stroke="#000000" strokeWidth="4" />
      </g>
    </MapFrame>
  );
}

/* ---------- page ---------- */

const TS = { size: 40, lh: 50 };

export default function App() {
  return (
    <>
      <GlobalStyle />
      <Page>
        <Header>
          <Logo>
            <Fit w={288} size={127} lh={130} weight={800} color="#fdb22b" mt={8.5}>Duoc</Fit>
            <LogoGap $w={19} />
            <Fit w={146} size={118} lh={130} weight={700} color="#ffffff" mt={11.5} bolder={2}>UC</Fit>
            <LogoGap $w={4} />
            <CrestMark />
          </Logo>
          <TitleWrap>
            <Fit w={1037} size={65.5} lh={80} weight={700} color="#ffffff">DASHBOARD COLEGIO V REGIÓN</Fit>
          </TitleWrap>
        </Header>
        <Body>
          <Sidebar>
            <Indent $l={16.5}>
              <Fit w={240.5} size={53} lh={60} weight={700} family={DIN}>Año Curso</Fit>
            </Indent>
            <YearRow>
              <YearButton $w={390.5}><Fit w={16} size={36} lh={50} color={MUTED}>3</Fit></YearButton>
              <YearButton $w={388}><Fit w={19} size={36} lh={50} color={MUTED}>4</Fit></YearButton>
            </YearRow>
            <Indent $l={18.5} $mt={22.5}>
              <Fit w={345} size={51} lh={60} family={DIN} bolder={0.9}>Buscar Colegio</Fit>
            </Indent>
            <SlicerHead>
              <Fit w={319} size={45} lh={60} family={DIN} bolder={0.9}>Nombre Colegio</Fit>
              <Chevron viewBox="0 0 38 22" fill="none" stroke={MUTED} strokeWidth="2.6">
                <path d="M2 2L19 19L36 2" />
              </Chevron>
            </SlicerHead>
            <ListArea>
              <Rows>
                {SCHOOLS.map(([name, w]) => (
                  <SchoolRow key={name}>
                    <CheckBox />
                    <Fit w={w} size={49.5} lh={70}>{name}</Fit>
                  </SchoolRow>
                ))}
              </Rows>
              <ListThumb />
            </ListArea>
          </Sidebar>
          <Main>
            <Cards>
              <Card $w={1068}>
                <Fit w={983} size={50} lh={70} weight={700} color={MUTED} mt={35}>Cantidad Matrículas de Establecimiento(s)</Fit>
                <Indent $l={9.6}>
                  <Fit w={839} size={165} lh={170} family={DIN} mt={36.5} bolder={2.6}>220,477 mil</Fit>
                </Indent>
              </Card>
              <Card $w={1860}>
                <Fit w={577} size={50} lh={70} weight={700} color={MUTED} mt={72.5}>Nombre Establecimiento</Fit>
                <Fit w={1388} size={74} lh={90} family={DIN} mt={21} bolder={1.2}>ABRAHAM LINCOLN MEMORIAL COLLEGE</Fit>
              </Card>
            </Cards>
            <Lower>
              <Center>
                <Indent $l={13} $mt={45}>
                  <Fit w={1373} size={50.5} lh={60} family={DIN} bolder={0.9}>Cantidad de Matrículas de Colegio(s) a lo Largo de los Años</Fit>
                </Indent>
                <Legend>
                  <Fit w={117.4} size={34.5} lh={46} weight={700} color={MUTED}>Colegio</Fit>
                  <LegendItem $first>
                    <Dot $c="#118dff" />
                    <Fit w={703} size={34.5} lh={46} color={MUTED}>LICEO BICENTENARIO GUILLERMO RICHARDS ...</Fit>
                  </LegendItem>
                  <LegendItem>
                    <Dot $c="#12239e" />
                    <Fit w={454} size={34.5} lh={46} color={MUTED}>LICEO EDUARDO DE LA BARRA</Fit>
                  </LegendItem>
                  <LegendItem>
                    <Dot $c="#e66c37" />
                    <Fit w={421} size={34.5} lh={46} color={MUTED}>LICEO PARTICULAR MIXTO ...</Fit>
                  </LegendItem>
                </Legend>
                <LineChart />
                <Indent $l={3}>
                  <Fit w={359.5} size={50} lh={60} family={DIN} bolder={0.9}>Mapa Colegio(s)</Fit>
                </Indent>
                <RegionMap />
              </Center>
              <Side>
                <TableFrame $l={3}>
                  <Table $w={1040}>
                    <HeadRow $h={100} $pt={17.8} $cols={COLS1}>
                      <HeadCell><Fit w={238} {...TS}>Dependencia</Fit></HeadCell>
                      <HeadCell>
                        <Fit w={286.5} {...TS}>Costo Matrícula</Fit>
                        <SortArrow $mt={4} viewBox="0 0 29 15"><path d="M0 15L14.5 0L29 15Z" fill={INK} /></SortArrow>
                      </HeadCell>
                    </HeadRow>
                    <TableBody $h={524.5}>
                      {COSTS.map(([dep, cost], i) => (
                        <Row key={i} $cols={COLS1} $odd={i % 2 === 1}>
                          <Cell><Fit w={dep[1]} {...TS}>{dep[0]}</Fit></Cell>
                          <Cell><Fit w={cost[1]} {...TS}>{cost[0]}</Fit></Cell>
                        </Row>
                      ))}
                    </TableBody>
                  </Table>
                  <VThumb $ml={3} $mt={15.6} $h={253.4} />
                </TableFrame>
                <HThumb />
                <TableFrame>
                  <Table $w={1011.7}>
                    <HeadRow $h={118.8} $pt={37.3} $cols={COLS2}>
                      <HeadCell><Fit w={223} {...TS}>Especialidad</Fit></HeadCell>
                      <HeadCell>
                        <Fit w={364} {...TS}>Cantidad Matrículas</Fit>
                        <SortArrow $mt={2} viewBox="0 0 29 15"><path d="M0 0H29L14.5 15Z" fill={INK} /></SortArrow>
                      </HeadCell>
                    </HeadRow>
                    <TableBody $h={777.2}>
                      {SPECIALTIES.map(([lines, count], i) => (
                        <Row key={i} $cols={COLS2} $odd={i % 2 === 1} $tall={lines.length > 1}>
                          <Cell>{lines.map(([t, w]) => <Fit key={t} w={w} size={40} lh={52.5}>{t}</Fit>)}</Cell>
                          <Cell $right><Fit w={count[1]} size={40} lh={52.5}>{count[0]}</Fit></Cell>
                        </Row>
                      ))}
                    </TableBody>
                    <TotalRow $cols={COLS2}>
                      <Cell><Fit w={93.6} {...TS} weight={700}>Total</Fit></Cell>
                      <Cell $right><Fit w={93.6} {...TS} weight={700}>8390</Fit></Cell>
                    </TotalRow>
                  </Table>
                  <VThumb $ml={31.3} $mt={33.8} $h={835} />
                </TableFrame>
              </Side>
            </Lower>
          </Main>
        </Body>
      </Page>
    </>
  );
}
